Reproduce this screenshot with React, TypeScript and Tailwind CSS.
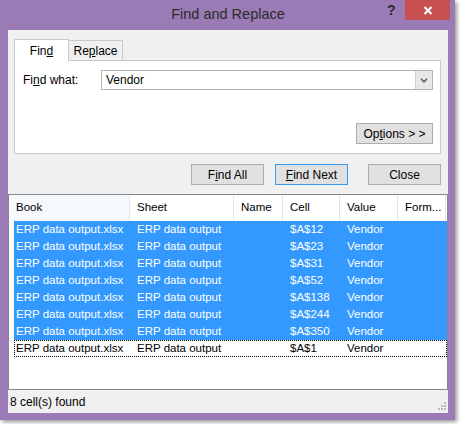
import React from "react"

const rows = [
    { cell: "$A$12", sel: true },
    { cell: "$A$23", sel: true },
    { cell: "$A$31", sel: true },
    { cell: "$A$52", sel: true },
    { cell: "$A$138", sel: true },
    { cell: "$A$244", sel: true },
    { cell: "$A$350", sel: true },
    { cell: "$A$1", sel: false },
]

function Btn({ children, focused, className }: { children: React.ReactNode; focused?: boolean; className?: string }) {
    return (
        <button
            className={`h-[21px] w-[73px] flex items-center justify-center bg-[#e1e1e1] border text-[12px] text-black ${focused ? "border-[#3c9ae8]" : "border-[#adadad]"} ${className ?? ""}`}>
            {children}
        </button>
    )
}

export default function App() {
    return (
        <div className="w-[461px] h-[424px] bg-white" style={{ fontFamily: '"Liberation Sans", Arial, sans-serif' }}>
            <div className="relative w-[455px] h-[420px] flex flex-col bg-[#9b7bb5] pl-[8px] pr-[7px] pb-[7px] shadow-[2px_2px_4px_rgba(0,0,0,0.4)]">
                {/* title bar */}
                <div className="h-[30px] flex items-center justify-center">
                    <span className="text-[14.5px] text-[#2b2b2b] -mt-[1px]">Find and Replace</span>
                </div>
                <div className="absolute top-[3px] left-[387px] text-[14px] font-bold text-[#2b2b2b] leading-none">?</div>
                <div className="absolute top-0 left-[405px] w-[45px] h-[20px] bg-[#c75050] flex items-center justify-center">
                    <svg width="10" height="9" viewBox="0 0 10 9">
                        <path d="M1.5 1 L8.5 8 M8.5 1 L1.5 8" stroke="white" strokeWidth="2" />
                    </svg>
                </div>

                {/* client */}
                <div className="flex-1 flex flex-col bg-[#f0f0f0] text-[12px] text-black">
                    <div className="pt-[8px] px-[6px] pr-[7px]">
                        {/* tabs */}
                        <div className="flex items-end h-[22px]">
                            <div className="relative z-10 w-[55px] h-[22px] -mb-[1px] bg-white border border-b-0 border-[#c8c8c8] flex items-center justify-center">
                                Fin<span className="underline">d</span>
                            </div>
                            <div className="w-[54px] h-[20px] border border-l-0 border-b-0 border-[#c8c8c8] bg-[#f0f0f0] flex items-center justify-center">
                                Re<span className="underline">p</span>lace
                            </div>
                        </div>
                        {/* panel */}
                        <div className="h-[94px] bg-white border border-[#c8c8c8] flex flex-col justify-between pt-[9px] pb-[9px] pl-[8px] pr-[7px]">
                            <div className="flex items-center">
                                <span className="w-[78px]">Fi<span className="underline">n</span>d what:</span>
                                <div className="flex-1 h-[20px] border border-[#b4b4b4] flex items-stretch">
                                    <span className="flex-1 pl-[4px] flex items-center">Vendor</span>
                                    <div className="w-[17px] bg-[#e8e8e8] border-l border-[#cfcfcf] flex items-center justify-center">
                                        <svg width="8" height="5" viewBox="0 0 8 5">
                                            <path d="M1 0.8 L4 3.8 L7 0.8" stroke="#606060" strokeWidth="1.6" fill="none" />
                                        </svg>
                                    </div>
                                </div>
                            </div>
                            <div className="flex justify-end">
                                <button className="h-[21px] w-[77px] bg-[#e1e1e1] border border-[#adadad] flex items-center justify-center text-[12px]">
                                    Op<span className="underline">t</span>ions &gt; &gt;
                                </button>
                            </div>
                        </div>
                        {/* buttons */}
                        <div className="flex justify-end mt-[10px]">
                            <Btn>F<span className="underline">i</span>nd All</Btn>
                            <Btn focused className="ml-[11px]"><span className="underline">F</span>ind Next</Btn>
                            <Btn className="ml-[20px]">Close</Btn>
                        </div>
                    </div>

                    {/* results list */}
                    <div className="mt-[9px] flex-1 bg-white border border-[#828790] flex flex-col text-[11.5px]">
                        <div className="h-[26px] flex items-stretch">
                            <div className="w-[121px] bg-[#f5f8fc] border-r border-[#e3e8ee] pl-[7px] flex items-center">Book</div>
                            <div className="w-[104px] border-r border-[#e5e5e5] pl-[7px] flex items-center">Sheet</div>
                            <div className="w-[49px] border-r border-[#e5e5e5] pl-[7px] flex items-center">Name</div>
                            <div className="w-[57px] border-r border-[#e5e5e5] pl-[7px] flex items-center">Cell</div>
                            <div className="w-[58px] border-r border-[#e5e5e5] pl-[7px] flex items-center">Value</div>
                            <div className="w-[48px] border-r border-[#e5e5e5] pl-[7px] flex items-center">Form...</div>
                        </div>
                        <div className="flex flex-col ml-[5px] mr-0">
                            {rows.map((r, i) => (
                                <div
                                    key={i}
                                    className={`h-[17px] flex items-center border ${r.sel ? "bg-[#3399ff] text-white border-[#3399ff]" : "border-dotted border-black"}`}>
                                    <span className="w-[115px] pl-[1px]">ERP data output.xlsx</span>
                                    <span className="w-[104px] pl-[7px]">ERP data output</span>
                                    <span className="w-[49px]"></span>
                                    <span className="w-[57px] pl-[7px]">{r.cell}</span>
                                    <span className="w-[58px] pl-[7px]">Vendor</span>
                                </div>
                            ))}
                        </div>
                    </div>

                    {/* status bar */}
                    <div className="h-[23px] flex items-center justify-between pl-[2px]">
                        <span>8 cell(s) found</span>
                        <svg width="10" height="10" viewBox="0 0 10 10" className="self-end mb-[2px] mr-[1px]">
                            <rect x="7" y="1" width="2" height="2" fill="#b8b8b8" />
                            <rect x="4" y="4" width="2" height="2" fill="#b8b8b8" />
                            <rect x="7" y="4" width="2" height="2" fill="#b8b8b8" />
                            <rect x="1" y="7" width="2" height="2" fill="#b8b8b8" />
                            <rect x="4" y="7" width="2" height="2" fill="#b8b8b8" />
                            <rect x="7" y="7" width="2" height="2" fill="#b8b8b8" />
                        </svg>
                    </div>
                </div>
            </div>
        </div>
    )
}
